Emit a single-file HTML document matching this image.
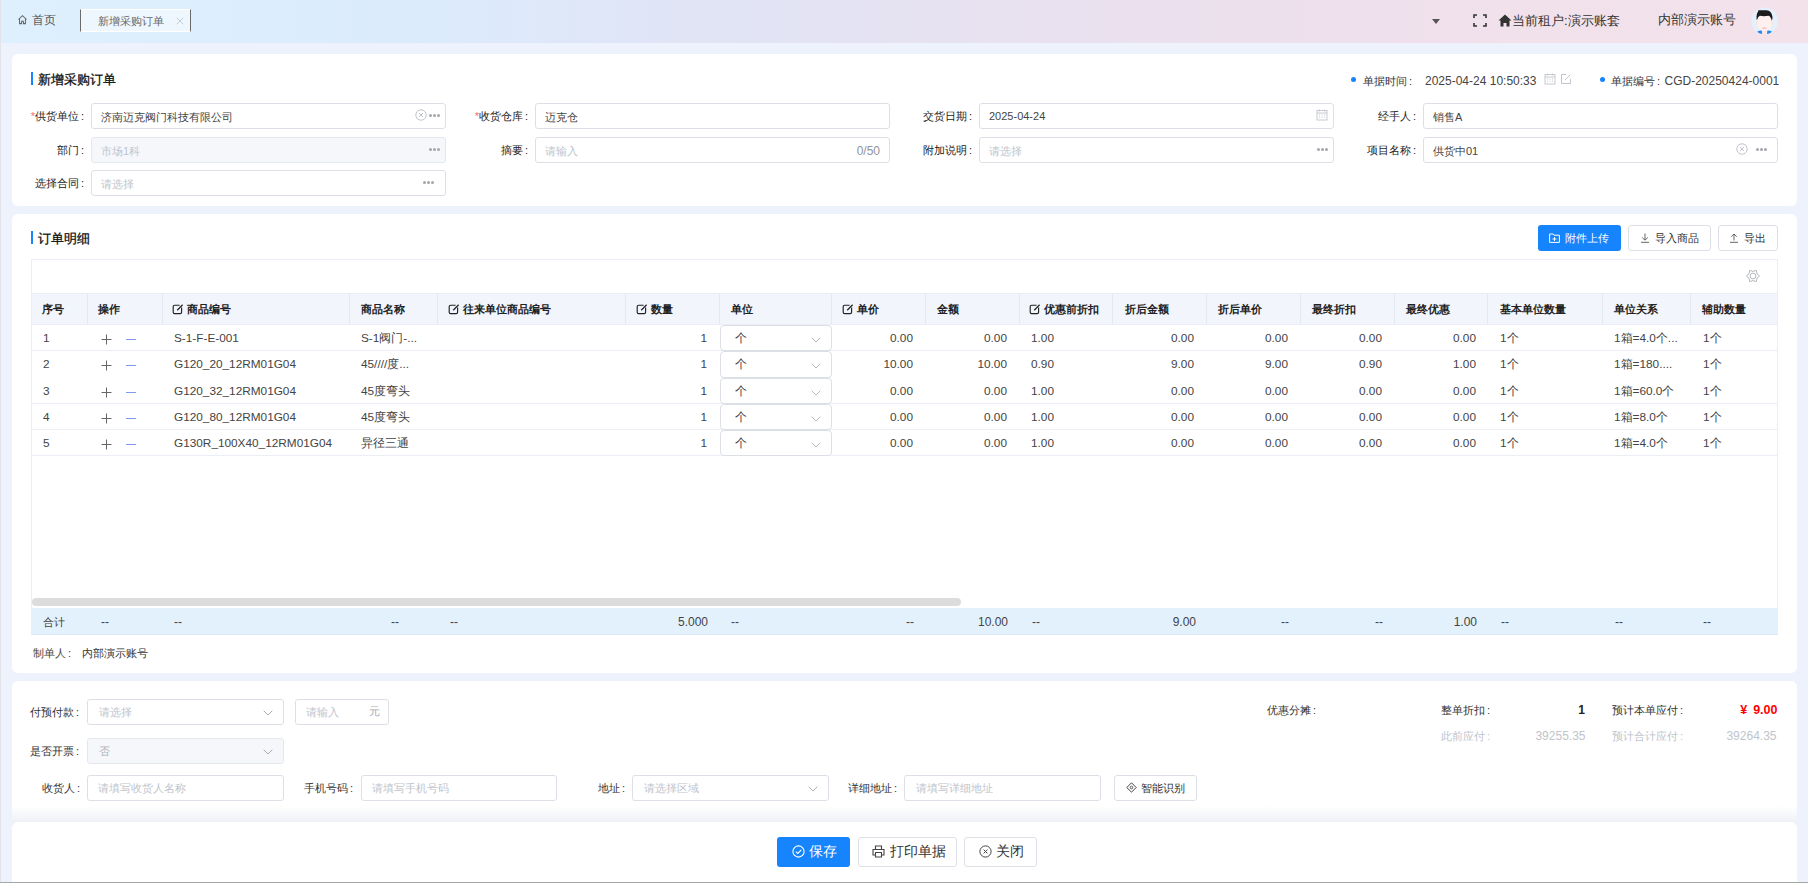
<!DOCTYPE html>
<html><head><meta charset="utf-8">
<style>
*{box-sizing:border-box;margin:0;padding:0}
html,body{width:1808px;height:883px;overflow:hidden}
body{position:relative;background:#eef2fc;font-family:"Liberation Sans",sans-serif;font-size:11px;color:#333}
.a{position:absolute;white-space:nowrap}
.card{position:absolute;background:#fff;border-radius:6px}
.ttl{position:absolute;font-size:13px;font-weight:500;color:#111;-webkit-text-stroke:0.3px #111;white-space:nowrap}
.bar{position:absolute;width:2px;background:#1684fc}
.inp{position:absolute;height:26px;border:1px solid #dcdfe6;border-radius:3px;background:#fff}
.inp.dis{background:#f5f7fa;border-color:#e4e7ed}
.lbl{position:absolute;text-align:right;color:#222;white-space:nowrap}
.red{color:#f56c6c}
.t{position:absolute;white-space:nowrap}
.ph{color:#c0c4cc}
.nocjk .cj{letter-spacing:.25em}
</style></head><body>
<div class="a" style="left:0;top:0;width:1808px;height:43px;background:linear-gradient(90deg,#def0fd 0%,#dbebfc 22%,#e1e4f5 40%,#e8e1f0 56%,#ede0ed 70%,#f1e1eb 85%,#f3e2ea 100%)"></div>
<div class="a" style="left:0;top:0;width:1px;height:883px;background:#e2e4ea;z-index:5"></div>
<div class="a" style="left:0;top:882px;width:1808px;height:1px;background:#a6a6a6;z-index:5"></div>
<div class="a" style="left:17px;top:12px;font-size:12px;color:#555"><svg width="11" height="11" viewBox="0 0 12 12" style="vertical-align:-1px;margin-right:4px"><path d="M1.5 6 L6 1.8 L10.5 6 M2.8 5 V10.5 H5 V8 H7 V10.5 H9.2 V5" fill="none" stroke="#666" stroke-width="1.1"/></svg><span class="cj">首页</span></div>
<div class="a" style="left:80px;top:9px;width:111px;height:23px;background:rgba(255,255,255,0.5);border:1px solid #fff;border-left:1.5px solid #6a6a6a;border-right:1.5px solid #6a6a6a"></div>
<div class="a" style="left:98px;top:14px;font-size:11.3px;color:#666"><span class="cj">新增采购订单</span></div>
<svg class="a" style="left:175.5px;top:17px" width="8" height="8" viewBox="0 0 8 8"><path d="M0.8 0.8 L7.2 7.2 M7.2 0.8 L0.8 7.2" stroke="#c4c4c4" stroke-width="0.9"/></svg>
<div class="a" style="left:1432px;top:19px;width:0;height:0;border-left:4px solid transparent;border-right:4px solid transparent;border-top:5px solid #555"></div>
<svg class="a" style="left:1473px;top:14px" width="14" height="13" viewBox="0 0 14 13"><path d="M1 4 V1 H4 M10 1 H13 V4 M13 9 V12 H10 M4 12 H1 V9" fill="none" stroke="#333" stroke-width="1.6"/></svg>
<svg class="a" style="left:1498px;top:14px" width="14" height="13" viewBox="0 0 14 13"><path d="M7 0.5 L13.5 6.5 H11.5 V12.5 H8.5 V9 H5.5 V12.5 H2.5 V6.5 H0.5 Z" fill="#333"/></svg>
<div class="a" style="left:1512px;top:12px;font-size:13px;color:#333"><span class="cj">当前租户</span>:<span class="cj">演示账套</span></div>
<div class="a" style="left:1658px;top:11px;font-size:13px;color:#333"><span class="cj">内部演示账号</span></div>
<svg class="a" style="left:1750.5px;top:7px" width="28" height="28" viewBox="0 0 28 28"><defs><clipPath id="cav"><circle cx="13.6" cy="13.8" r="13.4"/></clipPath></defs><circle cx="13.6" cy="13.8" r="13.4" fill="#e4f0fc"/><g clip-path="url(#cav)"><path d="M10.8 22 H16.4 V28 H10.8 Z" fill="#fde8e6"/><path d="M6.5 24.3 L10.8 23.2 L11.2 27 L7.5 27 Z M20.7 24.3 L16.4 23.2 L16 27 L19.7 27 Z" fill="#1e88f5"/><ellipse cx="13.4" cy="15.8" rx="7.6" ry="8.4" fill="#fef0ee"/><ellipse cx="5.9" cy="16" rx="1.2" ry="1.9" fill="#fce6e3"/><ellipse cx="21" cy="16" rx="1.2" ry="1.9" fill="#fce6e3"/><ellipse cx="13.4" cy="21.2" rx="2.3" ry="0.9" fill="#f8c2bd"/><path d="M5.6 12.5 Q5.2 6.6 7.2 4.6 Q6.8 3.6 7.6 3.2 H15.5 Q20.6 3.4 21.5 10 Q21.6 12.2 20.8 13.8 Q19.8 9.6 17.6 8.8 Q13 9.6 8.8 8.8 Q6.8 9.6 6.1 12.8 Z" fill="#1c1c1c"/></g></svg>
<div class="card" style="left:12px;top:54px;width:1785px;height:152px"></div>
<div class="card" style="left:12px;top:214px;width:1785px;height:459px"></div>
<div class="card" style="left:12px;top:681px;width:1785px;height:150px"></div>
<div class="a" style="left:12px;top:806px;width:1785px;height:24px;background:linear-gradient(180deg,rgba(238,241,247,0) 0px,#eef1f6 16px,#eef1f6 24px)"></div>
<div class="card" style="left:12px;top:822px;width:1785px;height:60px;border-radius:6px 6px 0 0"></div>
<div class="bar" style="left:31px;top:72px;height:13px"></div>
<div class="ttl" style="left:38px;top:70.5px"><span class="cj">新增采购订单</span></div>
<div class="a" style="left:1351px;top:77px;width:5px;height:5px;border-radius:50%;background:#1684fc"></div>
<div class="t" style="left:1363px;top:74px;color:#333;font-size:11.3px"><span class="cj">单据时间</span><span style="margin-left:2px">:</span></div>
<div class="t" style="left:1425px;top:74px;color:#444;font-size:12px">2025-04-24 10:50:33</div>
<svg class="a" style="left:1544px;top:73px" width="12" height="12" viewBox="0 0 12 12"><rect x="1" y="1.5" width="10" height="9.5" fill="none" stroke="#c0c4cc" stroke-width="0.9"/><path d="M1 4 H11 M3.5 0.5 V2.5 M8.5 0.5 V2.5" stroke="#c0c4cc" stroke-width="0.9"/><path d="M3 6 H4 M5.5 6 H6.5 M8 6 H9 M3 8.3 H4 M5.5 8.3 H6.5 M8 8.3 H9" stroke="#c0c4cc" stroke-width="0.9"/></svg>
<svg class="a" style="left:1560px;top:73px" width="12" height="12" viewBox="0 0 12 12"><path d="M6 1.5 H1.5 V10.5 H10.5 V6" fill="none" stroke="#c0c4cc" stroke-width="1"/><path d="M5 7 L10.5 1.5" stroke="#c0c4cc" stroke-width="1"/></svg>
<div class="a" style="left:1600px;top:77px;width:5px;height:5px;border-radius:50%;background:#1684fc"></div>
<div class="t" style="left:1611px;top:74px;color:#333;font-size:11.3px"><span class="cj">单据编号</span><span style="margin-left:2px">:</span></div>
<div class="t" style="left:1664.5px;top:74px;color:#444;font-size:12px">CGD-20250424-0001</div>
<div class="lbl" style="right:1724px;top:109px"><span class="red">*</span><span class="cj">供货单位</span><span style="margin-left:2px">:</span></div>
<div class="inp" style="left:91px;top:103px;width:355px"></div>
<div class="t" style="left:101px;top:110px;color:#444"><span class="cj">济南迈克阀门科技有限公司</span></div>
<svg class="a" style="left:415px;top:109px" width="12" height="12" viewBox="0 0 12 12"><circle cx="6" cy="6" r="5.2" fill="none" stroke="#b8bcc4" stroke-width="0.9"/><path d="M4 4 L8 8 M8 4 L4 8" stroke="#b8bcc4" stroke-width="0.9"/></svg><div class="a" style="left:428.7px;top:114px;width:3px;height:3px;border-radius:50%;background:#a3a6ad"></div><div class="a" style="left:432.9px;top:114px;width:3px;height:3px;border-radius:50%;background:#a3a6ad"></div><div class="a" style="left:437.1px;top:114px;width:3px;height:3px;border-radius:50%;background:#a3a6ad"></div>
<div class="lbl" style="right:1280px;top:109px"><span class="red">*</span><span class="cj">收货仓库</span><span style="margin-left:2px">:</span></div>
<div class="inp" style="left:535px;top:103px;width:355px"></div>
<div class="t" style="left:545px;top:110px;color:#444"><span class="cj">迈克仓</span></div>

<div class="lbl" style="right:836px;top:109px"><span class="cj">交货日期</span><span style="margin-left:2px">:</span></div>
<div class="inp" style="left:979px;top:103px;width:355px"></div>
<div class="t" style="left:989px;top:110px;color:#444">2025-04-24</div>
<svg class="a" style="left:1316px;top:109px" width="12" height="12" viewBox="0 0 12 12"><rect x="1" y="1.5" width="10" height="9.5" fill="none" stroke="#c0c4cc" stroke-width="0.9"/><path d="M1 4 H11 M3.5 0.5 V2.5 M8.5 0.5 V2.5" stroke="#c0c4cc" stroke-width="0.9"/><path d="M3 6 H4 M5.5 6 H6.5 M8 6 H9 M3 8.3 H4 M5.5 8.3 H6.5 M8 8.3 H9" stroke="#c0c4cc" stroke-width="0.9"/></svg>
<div class="lbl" style="right:392px;top:109px"><span class="cj">经手人</span><span style="margin-left:2px">:</span></div>
<div class="inp" style="left:1423px;top:103px;width:355px"></div>
<div class="t" style="left:1433px;top:110px;color:#444"><span class="cj">销售</span>A</div>

<div class="lbl" style="right:1724px;top:143px"><span class="cj">部门</span><span style="margin-left:2px">:</span></div>
<div class="inp dis" style="left:91px;top:137px;width:355px"></div>
<div class="t" style="left:101px;top:144px;color:#c0c4cc"><span class="cj">市场</span>1<span class="cj">科</span></div>
<div class="a" style="left:428.7px;top:148px;width:3px;height:3px;border-radius:50%;background:#a3a6ad"></div><div class="a" style="left:432.9px;top:148px;width:3px;height:3px;border-radius:50%;background:#a3a6ad"></div><div class="a" style="left:437.1px;top:148px;width:3px;height:3px;border-radius:50%;background:#a3a6ad"></div>
<div class="lbl" style="right:1280px;top:143px"><span class="cj">摘要</span><span style="margin-left:2px">:</span></div>
<div class="inp" style="left:535px;top:137px;width:355px"></div>
<div class="t" style="left:545px;top:144px;color:#c0c4cc"><span class="cj">请输入</span></div>
<div class="t" style="right:928px;top:143.5px;color:#909399;font-size:12px">0/50</div>
<div class="lbl" style="right:836px;top:143px"><span class="cj">附加说明</span><span style="margin-left:2px">:</span></div>
<div class="inp" style="left:979px;top:137px;width:355px"></div>
<div class="t" style="left:989px;top:144px;color:#c0c4cc"><span class="cj">请选择</span></div>
<div class="a" style="left:1316.7px;top:148px;width:3px;height:3px;border-radius:50%;background:#a3a6ad"></div><div class="a" style="left:1320.9px;top:148px;width:3px;height:3px;border-radius:50%;background:#a3a6ad"></div><div class="a" style="left:1325.1px;top:148px;width:3px;height:3px;border-radius:50%;background:#a3a6ad"></div>
<div class="lbl" style="right:392px;top:143px"><span class="cj">项目名称</span><span style="margin-left:2px">:</span></div>
<div class="inp" style="left:1423px;top:137px;width:355px"></div>
<div class="t" style="left:1433px;top:144px;color:#444"><span class="cj">供货中</span>01</div>
<svg class="a" style="left:1736px;top:143px" width="12" height="12" viewBox="0 0 12 12"><circle cx="6" cy="6" r="5.2" fill="none" stroke="#b8bcc4" stroke-width="0.9"/><path d="M4 4 L8 8 M8 4 L4 8" stroke="#b8bcc4" stroke-width="0.9"/></svg><div class="a" style="left:1755.7px;top:148px;width:3px;height:3px;border-radius:50%;background:#a3a6ad"></div><div class="a" style="left:1759.9px;top:148px;width:3px;height:3px;border-radius:50%;background:#a3a6ad"></div><div class="a" style="left:1764.1px;top:148px;width:3px;height:3px;border-radius:50%;background:#a3a6ad"></div>
<div class="lbl" style="right:1724px;top:176px"><span class="cj">选择合同</span><span style="margin-left:2px">:</span></div>
<div class="inp" style="left:91px;top:170px;width:355px"></div>
<div class="t" style="left:101px;top:177px;color:#c0c4cc"><span class="cj">请选择</span></div>
<div class="a" style="left:422.7px;top:181px;width:3px;height:3px;border-radius:50%;background:#a3a6ad"></div><div class="a" style="left:426.9px;top:181px;width:3px;height:3px;border-radius:50%;background:#a3a6ad"></div><div class="a" style="left:431.1px;top:181px;width:3px;height:3px;border-radius:50%;background:#a3a6ad"></div>
<div class="bar" style="left:31px;top:231px;height:13px"></div>
<div class="ttl" style="left:38px;top:229.5px"><span class="cj">订单明细</span></div>
<div class="a" style="left:1538px;top:225px;width:83px;height:26px;border-radius:3px;background:#1684fc"></div>
<svg class="a" style="left:1549px;top:233px" width="11" height="10" viewBox="0 0 11 10"><path d="M0.6 1 H4 L5 2.2 H10.4 V9.4 H0.6 Z" fill="none" stroke="#fff" stroke-width="1"/><path d="M5.5 4 V8 M3.5 6 H7.5" stroke="#fff" stroke-width="1"/></svg>
<div class="t" style="left:1565px;top:231px;color:#fff;font-size:11.3px"><span class="cj">附件上传</span></div>
<div class="a" style="left:1628px;top:225px;width:83px;height:26px;border-radius:3px;border:1px solid #dcdfe6;background:#fff"></div>
<svg class="a" style="left:1640px;top:233px" width="10" height="10" viewBox="0 0 10 10"><path d="M5 0.5 V7 M2.2 4.5 L5 7.2 L7.8 4.5 M1 9.3 H9" fill="none" stroke="#555" stroke-width="0.9"/></svg>
<div class="t" style="left:1655px;top:231px;color:#333;font-size:11.3px"><span class="cj">导入商品</span></div>
<div class="a" style="left:1718px;top:225px;width:60px;height:26px;border-radius:3px;border:1px solid #dcdfe6;background:#fff"></div>
<svg class="a" style="left:1729px;top:233px" width="10" height="10" viewBox="0 0 10 10"><path d="M5 7.5 V1 M2.2 3.7 L5 1 L7.8 3.7 M1 9.3 H9" fill="none" stroke="#555" stroke-width="0.9"/></svg>
<div class="t" style="left:1744px;top:231px;color:#333;font-size:11.3px"><span class="cj">导出</span></div>
<div class="a" style="left:31px;top:259px;width:1747px;height:375px;border:1px solid #ebeef5;border-bottom:none"></div>
<svg class="a" style="left:1746.4px;top:269.4px" width="14" height="14" viewBox="0 0 14 14"><path d="M13.50 7.00 L10.98 9.30 L10.25 12.63 L7.00 11.60 L3.75 12.63 L3.02 9.30 L0.50 7.00 L3.02 4.70 L3.75 1.37 L7.00 2.40 L10.25 1.37 L10.98 4.70 Z" fill="none" stroke="#b3b7be" stroke-width="1" stroke-linejoin="round"/><circle cx="7" cy="7" r="2.9" fill="none" stroke="#b3b7be" stroke-width="1"/></svg>
<div class="a" style="left:32px;top:293px;width:1745px;height:32px;background:#f2f6fc;border-top:1px solid #ebeef5;border-bottom:1px solid #ebeef5"></div>
<div class="a" style="left:87px;top:293px;width:1px;height:31px;background:#e4e8f0"></div>
<div class="a" style="left:162px;top:293px;width:1px;height:31px;background:#e4e8f0"></div>
<div class="a" style="left:349px;top:293px;width:1px;height:31px;background:#e4e8f0"></div>
<div class="a" style="left:437px;top:293px;width:1px;height:31px;background:#e4e8f0"></div>
<div class="a" style="left:625px;top:293px;width:1px;height:31px;background:#e4e8f0"></div>
<div class="a" style="left:719px;top:293px;width:1px;height:31px;background:#e4e8f0"></div>
<div class="a" style="left:831px;top:293px;width:1px;height:31px;background:#e4e8f0"></div>
<div class="a" style="left:925px;top:293px;width:1px;height:31px;background:#e4e8f0"></div>
<div class="a" style="left:1019px;top:293px;width:1px;height:31px;background:#e4e8f0"></div>
<div class="a" style="left:1112px;top:293px;width:1px;height:31px;background:#e4e8f0"></div>
<div class="a" style="left:1206px;top:293px;width:1px;height:31px;background:#e4e8f0"></div>
<div class="a" style="left:1300px;top:293px;width:1px;height:31px;background:#e4e8f0"></div>
<div class="a" style="left:1394px;top:293px;width:1px;height:31px;background:#e4e8f0"></div>
<div class="a" style="left:1487px;top:293px;width:1px;height:31px;background:#e4e8f0"></div>
<div class="a" style="left:1602px;top:293px;width:1px;height:31px;background:#e4e8f0"></div>
<div class="a" style="left:1690px;top:293px;width:1px;height:31px;background:#e4e8f0"></div>
<div class="t" style="left:42px;top:303px;font-weight:bold;color:#222;font-size:10.8px"><span class="cj">序号</span></div>
<div class="t" style="left:98px;top:303px;font-weight:bold;color:#222;font-size:10.8px"><span class="cj">操作</span></div>
<svg class="a" style="left:172.4px;top:304px" width="13" height="11" viewBox="0 0 13 11"><path d="M7.6 1.2 H2.6 Q1.2 1.2 1.2 2.6 V8.2 Q1.2 9.6 2.6 9.6 H8.2 Q9.6 9.6 9.6 8.2 V3.4" fill="none" stroke="#222" stroke-width="1.15"/><path d="M5.2 6.2 L10.6 0.8" stroke="#222" stroke-width="1.25"/></svg>
<div class="t" style="left:187px;top:303px;font-weight:bold;color:#222;font-size:10.8px"><span class="cj">商品编号</span></div>
<div class="t" style="left:361px;top:303px;font-weight:bold;color:#222;font-size:10.8px"><span class="cj">商品名称</span></div>
<svg class="a" style="left:448.4px;top:304px" width="13" height="11" viewBox="0 0 13 11"><path d="M7.6 1.2 H2.6 Q1.2 1.2 1.2 2.6 V8.2 Q1.2 9.6 2.6 9.6 H8.2 Q9.6 9.6 9.6 8.2 V3.4" fill="none" stroke="#222" stroke-width="1.15"/><path d="M5.2 6.2 L10.6 0.8" stroke="#222" stroke-width="1.25"/></svg>
<div class="t" style="left:463px;top:303px;font-weight:bold;color:#222;font-size:10.8px"><span class="cj">往来单位商品编号</span></div>
<svg class="a" style="left:636.4px;top:304px" width="13" height="11" viewBox="0 0 13 11"><path d="M7.6 1.2 H2.6 Q1.2 1.2 1.2 2.6 V8.2 Q1.2 9.6 2.6 9.6 H8.2 Q9.6 9.6 9.6 8.2 V3.4" fill="none" stroke="#222" stroke-width="1.15"/><path d="M5.2 6.2 L10.6 0.8" stroke="#222" stroke-width="1.25"/></svg>
<div class="t" style="left:651px;top:303px;font-weight:bold;color:#222;font-size:10.8px"><span class="cj">数量</span></div>
<div class="t" style="left:731px;top:303px;font-weight:bold;color:#222;font-size:10.8px"><span class="cj">单位</span></div>
<svg class="a" style="left:842.4px;top:304px" width="13" height="11" viewBox="0 0 13 11"><path d="M7.6 1.2 H2.6 Q1.2 1.2 1.2 2.6 V8.2 Q1.2 9.6 2.6 9.6 H8.2 Q9.6 9.6 9.6 8.2 V3.4" fill="none" stroke="#222" stroke-width="1.15"/><path d="M5.2 6.2 L10.6 0.8" stroke="#222" stroke-width="1.25"/></svg>
<div class="t" style="left:857px;top:303px;font-weight:bold;color:#222;font-size:10.8px"><span class="cj">单价</span></div>
<div class="t" style="left:937px;top:303px;font-weight:bold;color:#222;font-size:10.8px"><span class="cj">金额</span></div>
<svg class="a" style="left:1029.4px;top:304px" width="13" height="11" viewBox="0 0 13 11"><path d="M7.6 1.2 H2.6 Q1.2 1.2 1.2 2.6 V8.2 Q1.2 9.6 2.6 9.6 H8.2 Q9.6 9.6 9.6 8.2 V3.4" fill="none" stroke="#222" stroke-width="1.15"/><path d="M5.2 6.2 L10.6 0.8" stroke="#222" stroke-width="1.25"/></svg>
<div class="t" style="left:1044px;top:303px;font-weight:bold;color:#222;font-size:10.8px"><span class="cj">优惠前折扣</span></div>
<div class="t" style="left:1125px;top:303px;font-weight:bold;color:#222;font-size:10.8px"><span class="cj">折后金额</span></div>
<div class="t" style="left:1218px;top:303px;font-weight:bold;color:#222;font-size:10.8px"><span class="cj">折后单价</span></div>
<div class="t" style="left:1312px;top:303px;font-weight:bold;color:#222;font-size:10.8px"><span class="cj">最终折扣</span></div>
<div class="t" style="left:1406px;top:303px;font-weight:bold;color:#222;font-size:10.8px"><span class="cj">最终优惠</span></div>
<div class="t" style="left:1500px;top:303px;font-weight:bold;color:#222;font-size:10.8px"><span class="cj">基本单位数量</span></div>
<div class="t" style="left:1614px;top:303px;font-weight:bold;color:#222;font-size:10.8px"><span class="cj">单位关系</span></div>
<div class="t" style="left:1702px;top:303px;font-weight:bold;color:#222;font-size:10.8px"><span class="cj">辅助数量</span></div>
<div class="a" style="left:32px;top:350px;width:1745px;height:1px;background:#ebeef5"></div>
<div class="t" style="left:43px;top:331px;color:#444;font-size:11.8px">1</div>
<svg class="a" style="left:101px;top:334px" width="11" height="11" viewBox="0 0 11 11"><path d="M5.5 0.5 V10.5 M0.5 5.5 H10.5" stroke="#666" stroke-width="1"/></svg>
<div class="a" style="left:126px;top:339px;width:10px;height:1px;background:#7d9bf3"></div>
<div class="t" style="left:174px;top:331px;color:#444;font-size:11.8px">S-1-F-E-001</div>
<div class="t" style="left:361px;top:331px;color:#444;font-size:11.8px">S-1<span class="cj">阀门</span>-...</div>
<div class="t" style="right:1101px;top:331px;color:#444;font-size:11.8px">1</div>
<div class="a" style="left:720px;top:325px;width:112px;height:25.5px;border:1px solid #dcdfe6;border-radius:4px;background:#fff"></div>
<div class="t" style="left:735px;top:331px;color:#444;font-size:11.8px"><span class="cj">个</span></div>
<svg class="a" style="left:811px;top:337px" width="10" height="6" viewBox="0 0 10 6"><path d="M0.7 0.7 L5 5 L9.3 0.7" fill="none" stroke="#b4b8c2" stroke-width="1"/></svg>
<div class="t" style="right:895px;top:331px;color:#444;font-size:11.8px">0.00</div>
<div class="t" style="right:801px;top:331px;color:#444;font-size:11.8px">0.00</div>
<div class="t" style="left:1031px;top:331px;color:#444;font-size:11.8px">1.00</div>
<div class="t" style="right:614px;top:331px;color:#444;font-size:11.8px">0.00</div>
<div class="t" style="right:520px;top:331px;color:#444;font-size:11.8px">0.00</div>
<div class="t" style="right:426px;top:331px;color:#444;font-size:11.8px">0.00</div>
<div class="t" style="right:332px;top:331px;color:#444;font-size:11.8px">0.00</div>
<div class="t" style="left:1500px;top:331px;color:#444;font-size:11.8px">1<span class="cj">个</span></div>
<div class="t" style="left:1614px;top:331px;color:#444;font-size:11.8px">1<span class="cj">箱</span>=4.0<span class="cj">个</span>...</div>
<div class="t" style="left:1703px;top:331px;color:#444;font-size:11.8px">1<span class="cj">个</span></div>
<div class="t" style="left:43px;top:357px;color:#444;font-size:11.8px">2</div>
<svg class="a" style="left:101px;top:360px" width="11" height="11" viewBox="0 0 11 11"><path d="M5.5 0.5 V10.5 M0.5 5.5 H10.5" stroke="#666" stroke-width="1"/></svg>
<div class="a" style="left:126px;top:365px;width:10px;height:1px;background:#7d9bf3"></div>
<div class="t" style="left:174px;top:357px;color:#444;font-size:11.8px">G120_20_12RM01G04</div>
<div class="t" style="left:361px;top:357px;color:#444;font-size:11.8px">45////<span class="cj">度</span>...</div>
<div class="t" style="right:1101px;top:357px;color:#444;font-size:11.8px">1</div>
<div class="a" style="left:720px;top:351px;width:112px;height:26.5px;border:1px solid #dcdfe6;border-radius:4px;background:#fff"></div>
<div class="t" style="left:735px;top:357px;color:#444;font-size:11.8px"><span class="cj">个</span></div>
<svg class="a" style="left:811px;top:363px" width="10" height="6" viewBox="0 0 10 6"><path d="M0.7 0.7 L5 5 L9.3 0.7" fill="none" stroke="#b4b8c2" stroke-width="1"/></svg>
<div class="t" style="right:895px;top:357px;color:#444;font-size:11.8px">10.00</div>
<div class="t" style="right:801px;top:357px;color:#444;font-size:11.8px">10.00</div>
<div class="t" style="left:1031px;top:357px;color:#444;font-size:11.8px">0.90</div>
<div class="t" style="right:614px;top:357px;color:#444;font-size:11.8px">9.00</div>
<div class="t" style="right:520px;top:357px;color:#444;font-size:11.8px">9.00</div>
<div class="t" style="right:426px;top:357px;color:#444;font-size:11.8px">0.90</div>
<div class="t" style="right:332px;top:357px;color:#444;font-size:11.8px">1.00</div>
<div class="t" style="left:1500px;top:357px;color:#444;font-size:11.8px">1<span class="cj">个</span></div>
<div class="t" style="left:1614px;top:357px;color:#444;font-size:11.8px">1<span class="cj">箱</span>=180....</div>
<div class="t" style="left:1703px;top:357px;color:#444;font-size:11.8px">1<span class="cj">个</span></div>
<div class="a" style="left:32px;top:403px;width:1745px;height:1px;background:#ebeef5"></div>
<div class="t" style="left:43px;top:384px;color:#444;font-size:11.8px">3</div>
<svg class="a" style="left:101px;top:387px" width="11" height="11" viewBox="0 0 11 11"><path d="M5.5 0.5 V10.5 M0.5 5.5 H10.5" stroke="#666" stroke-width="1"/></svg>
<div class="a" style="left:126px;top:392px;width:10px;height:1px;background:#7d9bf3"></div>
<div class="t" style="left:174px;top:384px;color:#444;font-size:11.8px">G120_32_12RM01G04</div>
<div class="t" style="left:361px;top:384px;color:#444;font-size:11.8px">45<span class="cj">度弯头</span></div>
<div class="t" style="right:1101px;top:384px;color:#444;font-size:11.8px">1</div>
<div class="a" style="left:720px;top:378px;width:112px;height:25.5px;border:1px solid #dcdfe6;border-radius:4px;background:#fff"></div>
<div class="t" style="left:735px;top:384px;color:#444;font-size:11.8px"><span class="cj">个</span></div>
<svg class="a" style="left:811px;top:390px" width="10" height="6" viewBox="0 0 10 6"><path d="M0.7 0.7 L5 5 L9.3 0.7" fill="none" stroke="#b4b8c2" stroke-width="1"/></svg>
<div class="t" style="right:895px;top:384px;color:#444;font-size:11.8px">0.00</div>
<div class="t" style="right:801px;top:384px;color:#444;font-size:11.8px">0.00</div>
<div class="t" style="left:1031px;top:384px;color:#444;font-size:11.8px">1.00</div>
<div class="t" style="right:614px;top:384px;color:#444;font-size:11.8px">0.00</div>
<div class="t" style="right:520px;top:384px;color:#444;font-size:11.8px">0.00</div>
<div class="t" style="right:426px;top:384px;color:#444;font-size:11.8px">0.00</div>
<div class="t" style="right:332px;top:384px;color:#444;font-size:11.8px">0.00</div>
<div class="t" style="left:1500px;top:384px;color:#444;font-size:11.8px">1<span class="cj">个</span></div>
<div class="t" style="left:1614px;top:384px;color:#444;font-size:11.8px">1<span class="cj">箱</span>=60.0<span class="cj">个</span></div>
<div class="t" style="left:1703px;top:384px;color:#444;font-size:11.8px">1<span class="cj">个</span></div>
<div class="a" style="left:32px;top:429px;width:1745px;height:1px;background:#ebeef5"></div>
<div class="t" style="left:43px;top:410px;color:#444;font-size:11.8px">4</div>
<svg class="a" style="left:101px;top:413px" width="11" height="11" viewBox="0 0 11 11"><path d="M5.5 0.5 V10.5 M0.5 5.5 H10.5" stroke="#666" stroke-width="1"/></svg>
<div class="a" style="left:126px;top:418px;width:10px;height:1px;background:#7d9bf3"></div>
<div class="t" style="left:174px;top:410px;color:#444;font-size:11.8px">G120_80_12RM01G04</div>
<div class="t" style="left:361px;top:410px;color:#444;font-size:11.8px">45<span class="cj">度弯头</span></div>
<div class="t" style="right:1101px;top:410px;color:#444;font-size:11.8px">1</div>
<div class="a" style="left:720px;top:404px;width:112px;height:25.5px;border:1px solid #dcdfe6;border-radius:4px;background:#fff"></div>
<div class="t" style="left:735px;top:410px;color:#444;font-size:11.8px"><span class="cj">个</span></div>
<svg class="a" style="left:811px;top:416px" width="10" height="6" viewBox="0 0 10 6"><path d="M0.7 0.7 L5 5 L9.3 0.7" fill="none" stroke="#b4b8c2" stroke-width="1"/></svg>
<div class="t" style="right:895px;top:410px;color:#444;font-size:11.8px">0.00</div>
<div class="t" style="right:801px;top:410px;color:#444;font-size:11.8px">0.00</div>
<div class="t" style="left:1031px;top:410px;color:#444;font-size:11.8px">1.00</div>
<div class="t" style="right:614px;top:410px;color:#444;font-size:11.8px">0.00</div>
<div class="t" style="right:520px;top:410px;color:#444;font-size:11.8px">0.00</div>
<div class="t" style="right:426px;top:410px;color:#444;font-size:11.8px">0.00</div>
<div class="t" style="right:332px;top:410px;color:#444;font-size:11.8px">0.00</div>
<div class="t" style="left:1500px;top:410px;color:#444;font-size:11.8px">1<span class="cj">个</span></div>
<div class="t" style="left:1614px;top:410px;color:#444;font-size:11.8px">1<span class="cj">箱</span>=8.0<span class="cj">个</span></div>
<div class="t" style="left:1703px;top:410px;color:#444;font-size:11.8px">1<span class="cj">个</span></div>
<div class="a" style="left:32px;top:455px;width:1745px;height:1px;background:#ebeef5"></div>
<div class="t" style="left:43px;top:436px;color:#444;font-size:11.8px">5</div>
<svg class="a" style="left:101px;top:439px" width="11" height="11" viewBox="0 0 11 11"><path d="M5.5 0.5 V10.5 M0.5 5.5 H10.5" stroke="#666" stroke-width="1"/></svg>
<div class="a" style="left:126px;top:444px;width:10px;height:1px;background:#7d9bf3"></div>
<div class="t" style="left:174px;top:436px;color:#444;font-size:11.8px">G130R_100X40_12RM01G04</div>
<div class="t" style="left:361px;top:436px;color:#444;font-size:11.8px"><span class="cj">异径三通</span></div>
<div class="t" style="right:1101px;top:436px;color:#444;font-size:11.8px">1</div>
<div class="a" style="left:720px;top:430px;width:112px;height:25.5px;border:1px solid #dcdfe6;border-radius:4px;background:#fff"></div>
<div class="t" style="left:735px;top:436px;color:#444;font-size:11.8px"><span class="cj">个</span></div>
<svg class="a" style="left:811px;top:442px" width="10" height="6" viewBox="0 0 10 6"><path d="M0.7 0.7 L5 5 L9.3 0.7" fill="none" stroke="#b4b8c2" stroke-width="1"/></svg>
<div class="t" style="right:895px;top:436px;color:#444;font-size:11.8px">0.00</div>
<div class="t" style="right:801px;top:436px;color:#444;font-size:11.8px">0.00</div>
<div class="t" style="left:1031px;top:436px;color:#444;font-size:11.8px">1.00</div>
<div class="t" style="right:614px;top:436px;color:#444;font-size:11.8px">0.00</div>
<div class="t" style="right:520px;top:436px;color:#444;font-size:11.8px">0.00</div>
<div class="t" style="right:426px;top:436px;color:#444;font-size:11.8px">0.00</div>
<div class="t" style="right:332px;top:436px;color:#444;font-size:11.8px">0.00</div>
<div class="t" style="left:1500px;top:436px;color:#444;font-size:11.8px">1<span class="cj">个</span></div>
<div class="t" style="left:1614px;top:436px;color:#444;font-size:11.8px">1<span class="cj">箱</span>=4.0<span class="cj">个</span></div>
<div class="t" style="left:1703px;top:436px;color:#444;font-size:11.8px">1<span class="cj">个</span></div>
<div class="a" style="left:32px;top:598px;width:929px;height:8px;border-radius:4px;background:#dcdcdc"></div>
<div class="a" style="left:31px;top:608px;width:1747px;height:27px;background:#e3f1fd;border-bottom:1px solid #dbe8f5"></div>
<div class="t" style="left:43px;top:615px;color:#444;font-size:11px"><span class="cj">合计</span></div>
<div class="t" style="left:101px;top:615px;color:#444;font-size:12px">--</div>
<div class="t" style="left:174px;top:615px;color:#444;font-size:12px">--</div>
<div class="t" style="right:1409px;top:615px;color:#444;font-size:12px">--</div>
<div class="t" style="left:450px;top:615px;color:#444;font-size:12px">--</div>
<div class="t" style="right:1100px;top:615px;color:#444;font-size:12px">5.000</div>
<div class="t" style="left:731px;top:615px;color:#444;font-size:12px">--</div>
<div class="t" style="right:894px;top:615px;color:#444;font-size:12px">--</div>
<div class="t" style="right:800px;top:615px;color:#444;font-size:12px">10.00</div>
<div class="t" style="left:1032px;top:615px;color:#444;font-size:12px">--</div>
<div class="t" style="right:612px;top:615px;color:#444;font-size:12px">9.00</div>
<div class="t" style="right:519px;top:615px;color:#444;font-size:12px">--</div>
<div class="t" style="right:425px;top:615px;color:#444;font-size:12px">--</div>
<div class="t" style="right:331px;top:615px;color:#444;font-size:12px">1.00</div>
<div class="t" style="left:1501px;top:615px;color:#444;font-size:12px">--</div>
<div class="t" style="left:1615px;top:615px;color:#444;font-size:12px">--</div>
<div class="t" style="left:1703px;top:615px;color:#444;font-size:12px">--</div>
<div class="t" style="left:33px;top:646px;color:#444"><span class="cj">制单人</span><span style="margin-left:2px">:</span></div>
<div class="t" style="left:82px;top:646px;color:#333;font-size:11.3px"><span class="cj">内部演示账号</span></div>
<div class="t" style="left:30px;top:705px;color:#333;"><span class="cj">付预付款</span><span style="margin-left:2px">:</span></div>
<div class="a" style="left:87px;top:699px;width:197px;height:26px;border:1px solid #dcdfe6;border-radius:3px;background:#fff"></div>
<div class="t" style="left:99px;top:705px;color:#c0c4cc;"><span class="cj">请选择</span></div>
<svg class="a" style="left:263px;top:710px" width="10" height="6" viewBox="0 0 10 6"><path d="M0.7 0.7 L5 5 L9.3 0.7" fill="none" stroke="#a8abb2" stroke-width="1"/></svg>
<div class="a" style="left:295px;top:699px;width:94px;height:26px;border:1px solid #dcdfe6;border-radius:3px;background:#fff"></div>
<div class="t" style="left:306px;top:705px;color:#c0c4cc;"><span class="cj">请输入</span></div>
<div class="t" style="left:369px;top:704px;color:#a8abb2;"><span class="cj">元</span></div>
<div class="t" style="left:30px;top:744px;color:#333;"><span class="cj">是否开票</span><span style="margin-left:2px">:</span></div>
<div class="a" style="left:87px;top:738px;width:197px;height:26px;border:1px solid #e4e7ed;border-radius:3px;background:#f5f7fa"></div>
<div class="t" style="left:99px;top:744px;color:#b0b3b8;"><span class="cj">否</span></div>
<svg class="a" style="left:263px;top:749px" width="10" height="6" viewBox="0 0 10 6"><path d="M0.7 0.7 L5 5 L9.3 0.7" fill="none" stroke="#a8abb2" stroke-width="1"/></svg>
<div class="t" style="left:42px;top:781px;color:#333;"><span class="cj">收货人</span><span style="margin-left:2px">:</span></div>
<div class="a" style="left:87px;top:775px;width:197px;height:26px;border:1px solid #dcdfe6;border-radius:3px;background:#fff"></div>
<div class="t" style="left:98px;top:781px;color:#c0c4cc;"><span class="cj">请填写收货人名称</span></div>
<div class="t" style="left:304px;top:781px;color:#333;"><span class="cj">手机号码</span><span style="margin-left:2px">:</span></div>
<div class="a" style="left:361px;top:775px;width:196px;height:26px;border:1px solid #dcdfe6;border-radius:3px;background:#fff"></div>
<div class="t" style="left:372px;top:781px;color:#c0c4cc;"><span class="cj">请填写手机号码</span></div>
<div class="t" style="left:598px;top:781px;color:#333;"><span class="cj">地址</span><span style="margin-left:2px">:</span></div>
<div class="a" style="left:632px;top:775px;width:197px;height:26px;border:1px solid #dcdfe6;border-radius:3px;background:#fff"></div>
<div class="t" style="left:644px;top:781px;color:#c0c4cc;"><span class="cj">请选择区域</span></div>
<svg class="a" style="left:808px;top:786px" width="10" height="6" viewBox="0 0 10 6"><path d="M0.7 0.7 L5 5 L9.3 0.7" fill="none" stroke="#a8abb2" stroke-width="1"/></svg>
<div class="t" style="left:848px;top:781px;color:#333;"><span class="cj">详细地址</span><span style="margin-left:2px">:</span></div>
<div class="a" style="left:904px;top:775px;width:197px;height:26px;border:1px solid #dcdfe6;border-radius:3px;background:#fff"></div>
<div class="t" style="left:916px;top:781px;color:#c0c4cc;"><span class="cj">请填写详细地址</span></div>
<div class="a" style="left:1114px;top:775px;width:83px;height:26px;border:1px solid #dcdfe6;border-radius:3px;background:#fff"></div>
<svg class="a" style="left:1126px;top:782px" width="11" height="11" viewBox="0 0 11 11"><path d="M5.5 0.8 L10.2 5.5 L5.5 10.2 L0.8 5.5 Z" fill="none" stroke="#444" stroke-width="1"/><circle cx="5.5" cy="5.5" r="1.3" fill="none" stroke="#444" stroke-width="0.9"/></svg>
<div class="t" style="left:1141px;top:781px;color:#333;"><span class="cj">智能识别</span></div>
<div class="t" style="left:1267px;top:703px;color:#333;"><span class="cj">优惠分摊</span><span style="margin-left:2px">:</span></div>
<div class="t" style="left:1441px;top:703px;color:#333;"><span class="cj">整单折扣</span><span style="margin-left:2px">:</span></div>
<div class="t" style="right:223px;top:703px;color:#222;font-weight:bold;font-size:12px">1</div>
<div class="t" style="left:1612px;top:703px;color:#333;"><span class="cj">预计本单应付</span><span style="margin-left:2px">:</span></div>
<div class="t" style="right:30.5px;top:703px;color:#f00;font-weight:bold;font-size:12.5px">¥<span style="margin-left:6px">9.00</span></div>
<div class="t" style="left:1441px;top:729px;color:#c0c4cc;"><span class="cj">此前应付</span><span style="margin-left:2px">:</span></div>
<div class="t" style="right:222.5px;top:729px;color:#c0c4cc;font-size:12px">39255.35</div>
<div class="t" style="left:1612px;top:729px;color:#c0c4cc;"><span class="cj">预计合计应付</span><span style="margin-left:2px">:</span></div>
<div class="t" style="right:31.5px;top:729px;color:#c0c4cc;font-size:12px">39264.35</div>
<div class="a" style="left:777px;top:837px;width:73px;height:30px;border-radius:3px;background:#1684fc"></div>
<svg class="a" style="left:792px;top:845px" width="13" height="13" viewBox="0 0 13 13"><circle cx="6.5" cy="6.5" r="5.6" fill="none" stroke="#fff" stroke-width="1.1"/><path d="M3.8 6.6 L5.8 8.5 L9.3 4.8" fill="none" stroke="#fff" stroke-width="1.1"/></svg>
<div class="t" style="left:809px;top:843px;color:#fff;font-size:13.5px"><span class="cj">保存</span></div>
<div class="a" style="left:858px;top:837px;width:99px;height:30px;border-radius:3px;border:1px solid #dcdfe6;background:#fff"></div>
<svg class="a" style="left:872px;top:845px" width="13" height="13" viewBox="0 0 13 13"><path d="M3.5 4.5 V1 H9.5 V4.5 M3 10 H1 V4.5 H12 V10 H10 M3.5 7.5 H9.5 V12 H3.5 Z" fill="none" stroke="#444" stroke-width="1.1"/></svg>
<div class="t" style="left:890px;top:843px;color:#333;font-size:13.5px"><span class="cj">打印单据</span></div>
<div class="a" style="left:964px;top:837px;width:73px;height:30px;border-radius:3px;border:1px solid #dcdfe6;background:#fff"></div>
<svg class="a" style="left:979px;top:845px" width="13" height="13" viewBox="0 0 13 13"><circle cx="6.5" cy="6.5" r="5.6" fill="none" stroke="#444" stroke-width="1"/><path d="M4.6 4.6 L8.4 8.4 M8.4 4.6 L4.6 8.4" stroke="#444" stroke-width="1"/></svg>
<div class="t" style="left:996px;top:843px;color:#333;font-size:13.5px"><span class="cj">关闭</span></div>
<script>(function(){try{var s=document.createElement('span');s.style.cssText='position:absolute;left:-9999px;top:0;font-size:100px;white-space:nowrap';s.textContent='中中';document.body.appendChild(s);var w=s.getBoundingClientRect().width;document.body.removeChild(s);if(w<190)document.body.className+=' nocjk';}catch(e){}})();</script>
</body></html>
